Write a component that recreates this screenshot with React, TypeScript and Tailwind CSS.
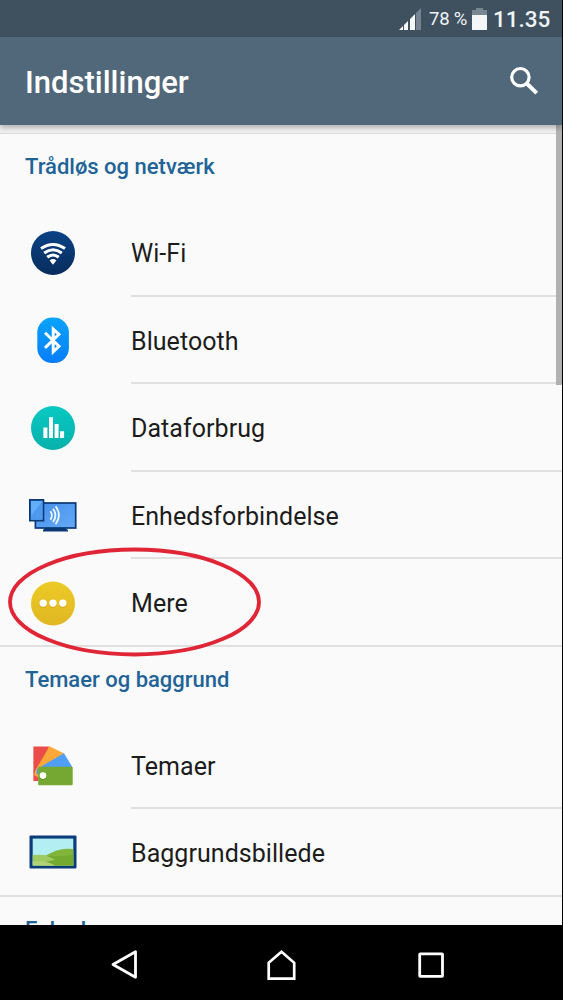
import type { ReactNode } from 'react';

function WifiIcon() {
  return (
    <svg viewBox="0 0 56 56" className="size-14">
      <defs>
        <linearGradient id="navy" x1="0" y1="0" x2="0" y2="1">
          <stop offset="0" stopColor="#0b4285" />
          <stop offset="1" stopColor="#082c5c" />
        </linearGradient>
      </defs>
      <circle cx="28" cy="28" r="22" fill="url(#navy)" />
      <g fill="none" stroke="#fff" strokeWidth="3">
        <path d="M16 23.6Q28 15.4 40 23.6" />
        <path d="M19.2 28Q28 21.6 36.8 28" />
        <path d="M22.3 32.2Q28 27.8 33.7 32.2" />
      </g>
      <path d="M24.6 35.4Q28 32.8 31.4 35.4L28 39.8Z" fill="#fff" />
    </svg>
  );
}

function BluetoothIcon() {
  return (
    <svg viewBox="0 0 56 56" className="size-14">
      <defs>
        <linearGradient id="blue" x1="0" y1="0" x2="0" y2="1">
          <stop offset="0" stopColor="#08a4fb" />
          <stop offset="1" stopColor="#087dfa" />
        </linearGradient>
      </defs>
      <rect x="12.3" y="5.6" width="31.6" height="45.5" rx="15" fill="url(#blue)" />
      <path d="M20 20.8L34 34.3L28.2 39.8V17.1L34 22.4L20 35.9" fill="none" stroke="#fff" strokeWidth="2.9" />
    </svg>
  );
}

function DataIcon() {
  return (
    <svg viewBox="0 0 56 56" className="size-14">
      <defs>
        <linearGradient id="teal" x1="0" y1="0" x2="0" y2="1">
          <stop offset="0" stopColor="#08c9c2" />
          <stop offset="1" stopColor="#08b0ab" />
        </linearGradient>
      </defs>
      <circle cx="28" cy="28" r="22" fill="url(#teal)" />
      <path d="M18.4 27.5h4V38h-4zM24 17.2h4V38h-4zM29.6 24h4V38h-4zM35.1 31.2h4V38h-4z" fill="#fff" />
    </svg>
  );
}

function DevicesIcon() {
  return (
    <svg viewBox="0 0 56 56" className="size-14">
      <defs>
        <linearGradient id="screen" x1="0" y1="0" x2="1" y2="1">
          <stop offset="0" stopColor="#448feb" />
          <stop offset="1" stopColor="#65aaf6" />
        </linearGradient>
      </defs>
      <path d="M20 41h20l3 2v1.6H18V43z" fill="#0b3975" />
      <rect x="10.4" y="16" width="40.3" height="25" fill="url(#screen)" stroke="#093873" strokeWidth="1.7" />
      <rect x="4.9" y="12.9" width="13.5" height="20.7" fill="#62aefa" stroke="#093873" strokeWidth="1.8" />
      <path d="M5.8 29L17.5 13.8V32.7H5.8z" fill="#4e99ee" />
      <g fill="none" stroke="#eef8ff" strokeWidth="1.8">
        <path d="M25.4 24.2Q28.5 28.4 25.4 32.6" />
        <path d="M28 21.8Q33 28.4 28 35" />
        <path d="M30.6 19.2Q37.2 28.4 30.6 37.2" />
      </g>
    </svg>
  );
}

function MoreIcon() {
  return (
    <svg viewBox="0 0 56 56" className="mt-1 size-14">
      <defs>
        <linearGradient id="yellow" x1="0" y1="0" x2="0" y2="1">
          <stop offset="0" stopColor="#eccb27" />
          <stop offset="1" stopColor="#e0b722" />
        </linearGradient>
      </defs>
      <circle cx="28" cy="27.5" r="22" fill="url(#yellow)" />
      <g fill="#c99b1b" opacity=".5">
        <circle cx="18.2" cy="28.2" r="3.8" />
        <circle cx="28" cy="28.2" r="3.8" />
        <circle cx="37.8" cy="28.2" r="3.8" />
      </g>
      <g fill="#fff">
        <circle cx="18.2" cy="27.1" r="3.7" />
        <circle cx="28" cy="27.1" r="3.7" />
        <circle cx="37.8" cy="27.1" r="3.7" />
      </g>
    </svg>
  );
}

function ThemesIcon() {
  return (
    <svg viewBox="0 0 56 56" className="mt-0.5 size-14">
      <path d="M8.4 8.5H24L20 24L13.2 43H8.4z" fill="#e94c49" />
      <path d="M24.5 8.3L39 15.6L14 40L9 37L10.5 32z" fill="#fba73a" />
      <path d="M39 15.2L47.5 29.4L20 38L11.5 36L11.8 31z" fill="#4f9ef8" />
      <rect x="13.2" y="28.8" width="34.5" height="18.4" rx="1" fill="#75a833" />
      <circle cx="18" cy="38.3" r="3.6" fill="#4d8423" opacity=".4" />
      <circle cx="18" cy="37.6" r="3.3" fill="#fff" />
    </svg>
  );
}

function WallpaperIcon() {
  return (
    <svg viewBox="0 0 56 56" className="mt-px size-14">
      <rect x="4.5" y="11.5" width="47" height="33" rx="1" fill="#0b3c7a" />
      <rect x="7.7" y="14.6" width="40.6" height="26.8" fill="#b2eef2" />
      <path d="M21 31.5Q32 25 42 24.7L48.3 25V41.4H16z" fill="#80b539" />
      <path d="M7.7 31Q21 29.6 35 34.5L48.3 38V41.4H7.7z" fill="#a0cb63" />
      <path d="M21 31.6Q34 33.5 48.3 30.5V41.4H29L10 38.6Q20 39 30 35.8z" fill="#74aa2f" />
      <path d="M7.7 37.5Q22 36.5 30 41.4H7.7z" fill="#b1d278" />
    </svg>
  );
}

function Heading({ children }: { children: ReactNode }) {
  return (
    <h2 className="flex h-[75px] items-start pl-[25px] pt-[18px] text-[22px] leading-[30px] font-medium text-[#216397]">
      {children}
    </h2>
  );
}

function Row({ icon, label, last = false }: { icon: ReactNode; label: string; last?: boolean }) {
  return (
    <li className={`flex h-[87.5px] pl-[25px] ${last ? 'border-b-2 border-[#e0e0e0]' : ''}`}>
      <div className="mr-[50px] flex w-14 shrink-0 items-center">{icon}</div>
      <div
        className={`flex flex-1 items-center pt-1 text-[25px] tracking-[0.05px] text-[#1c1c1c] ${last ? '' : 'border-b-2 border-[#e0e0e0]'}`}
      >
        {label}
      </div>
    </li>
  );
}

export default function App() {
  return (
    <div className="relative flex h-[1000px] w-[563px] flex-col overflow-hidden border-r border-black bg-[#fafafa] font-[Roboto,sans-serif]">
      <div className="flex h-[37px] shrink-0 items-center bg-[#3f505f] pl-[399px] text-[#f0f4f7]">
        <svg viewBox="0 0 22 24" className="mt-[3px] h-6 w-[22px]">
          <path d="M0 22l4-4v4zM5 17l4-4v9H5zM11 11l5-5v16h-5z" fill="#f5f7f8" />
          <path d="M17 5l5-5v22h-5z" fill="#74838f" />
        </svg>
        <span className="ml-2 mt-0.5 w-[39px] text-[18.5px] tracking-[-0.2px] whitespace-nowrap">78 %</span>
        <svg viewBox="0 0 15 24" className="ml-1 mt-[3px] h-6 w-[15px]">
          <path d="M0 2h4V0h7v2h4v5H0z" fill="#788791" />
          <path d="M0 7h15v15H0z" fill="#f4f6f7" />
        </svg>
        <span className="ml-1.5 mt-[3px] text-[22.5px] font-medium">11.35</span>
      </div>
      <header className="z-10 flex h-[88px] shrink-0 items-center justify-between bg-[#51687a] pl-[25px] pr-[23px] text-white shadow-[0_3px_5px_rgba(0,0,0,0.25)]">
        <h1 className="pt-[5px] text-[31px] font-medium">Indstillinger</h1>
        <svg viewBox="0 0 30 30" className="size-[30px]">
          <circle cx="11.4" cy="11.2" r="8.7" fill="none" stroke="#fff" strokeWidth="3.2" />
          <path d="M17.5 17.3L27.7 27.1" stroke="#fff" strokeWidth="4" />
        </svg>
      </header>
      <main className="relative h-[800px] shrink-0 overflow-hidden">
        <div className="h-[9px] border-b border-[#dcdcdc] bg-[#f1f1f1]" />
        <section>
          <Heading>Trådløs og netværk</Heading>
          <ul>
            <Row icon={<WifiIcon />} label="Wi-Fi" />
            <Row icon={<BluetoothIcon />} label="Bluetooth" />
            <Row icon={<DataIcon />} label="Dataforbrug" />
            <Row icon={<DevicesIcon />} label="Enhedsforbindelse" />
            <Row icon={<MoreIcon />} label="Mere" last />
          </ul>
        </section>
        <section>
          <Heading>Temaer og baggrund</Heading>
          <ul>
            <Row icon={<ThemesIcon />} label="Temaer" />
            <Row icon={<WallpaperIcon />} label="Baggrundsbillede" last />
          </ul>
        </section>
        <Heading>Enhed</Heading>
        <div className="absolute top-0 right-0 h-[260px] w-1.5 bg-[#b1b1b1]" />
      </main>
      <nav className="flex h-[75px] shrink-0 items-center bg-black pl-[109px]">
        <svg viewBox="0 0 32 32" className="mt-[5px] size-8">
          <path d="M4 15.5L26.5 2.8V28.2Z" fill="none" stroke="#fff" strokeWidth="2.8" strokeLinejoin="round" />
        </svg>
        <svg viewBox="0 0 34 34" className="ml-[124px] mt-1 size-[34px]">
          <path d="M3.7 14.8L16.5 3.8L29.2 14.8V30.6H3.7Z" fill="none" stroke="#fff" strokeWidth="2.7" />
        </svg>
        <svg viewBox="0 0 30 30" className="ml-[117px] mt-1 size-[30px]">
          <rect x="3.7" y="3.8" width="22.8" height="22.5" rx=".5" fill="none" stroke="#fff" strokeWidth="2.8" />
        </svg>
      </nav>
      <svg viewBox="0 0 256 112" className="pointer-events-none absolute left-1.5 top-[546px] z-20 h-28 w-64">
        <ellipse cx="128.5" cy="56" rx="124.5" ry="52.5" fill="none" stroke="#df2536" strokeWidth="3.8" />
      </svg>
    </div>
  );
}
